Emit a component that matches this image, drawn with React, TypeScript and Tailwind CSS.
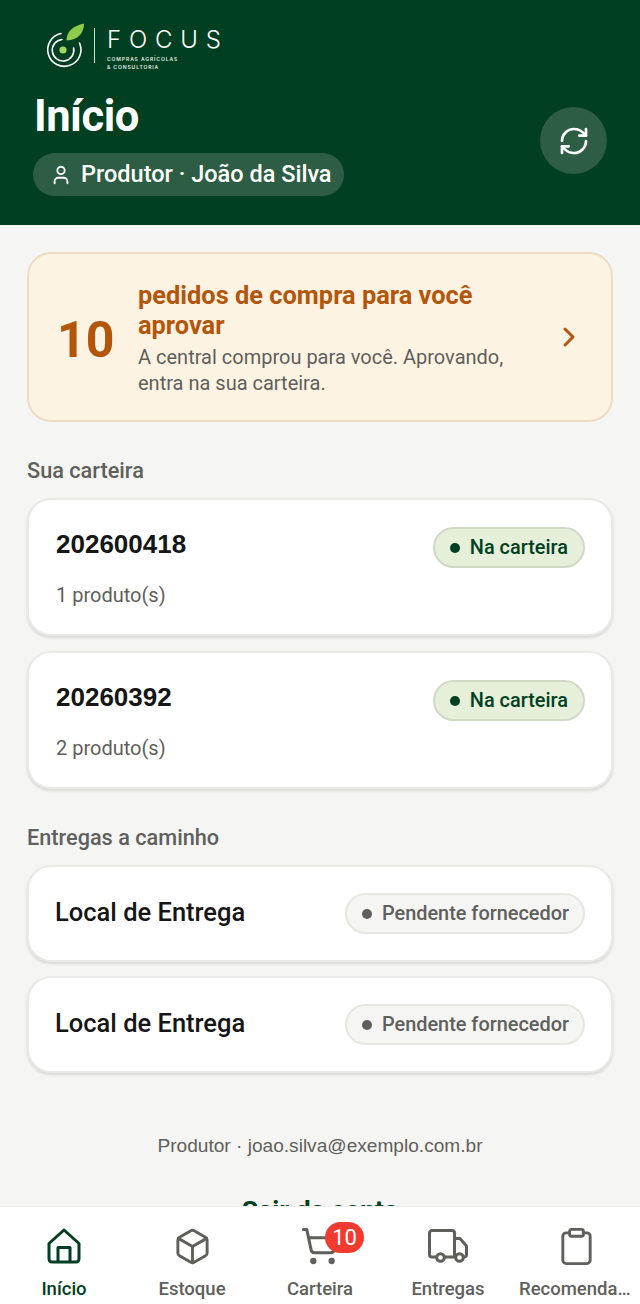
import React from 'react';
import { Box, ChevronRight, Clipboard, RefreshCw, ShoppingCart, User } from 'lucide-react';

const roboto = "font-['Roboto',sans-serif]";

const FocusMark = () => (
  <svg width="42" height="46" viewBox="0 0 42 46" fill="none">
    <path d="M16 10.500A16.600 16.600 0 1 0 34.500 20" stroke="#fff" strokeWidth="1.600" strokeLinecap="round" />
    <path d="M17 16.500A10.800 10.800 0 1 0 28.600 25" stroke="#fff" strokeWidth="1.600" strokeLinecap="round" />
    <circle cx="18" cy="27" r="3.600" fill="#a4d65e" />
    <path d="M21.500 17.500C21.500 8.500 28 3 39 0.500 39 10 33 17 21.500 17.500Z" fill="#8fcb4a" />
  </svg>
);

const HomeIcon = () => (
  <svg width="36" height="36" viewBox="0 0 36 36" fill="none" stroke="#003f21" strokeWidth="3" strokeLinejoin="round">
    <path d="M3 15.500 18 2l15 13.500v15.500a3 3 0 0 1-3 3H6a3 3 0 0 1-3-3Z" />
    <path d="M12 34V19.500h12V34" />
  </svg>
);

const TruckIcon = () => (
  <svg width="40" height="34" viewBox="0 0 40 34" fill="none" stroke="#5f5f5c" strokeWidth="3" strokeLinejoin="round">
    <path d="M9 28H4a2.500 2.500 0 0 1-2.500-2.500V4A2.500 2.500 0 0 1 4 1.500h20A2.500 2.500 0 0 1 26.500 4v24H16" />
    <path d="M26.500 9.500h5.500l6.500 7.500v8.500A2.500 2.500 0 0 1 36 28h-1" />
    <path d="M26.500 28H28" />
    <circle cx="12.500" cy="28.500" r="3.800" />
    <circle cx="31.500" cy="28.500" r="3.800" />
  </svg>
);

const Badge = ({ label, tone }: { label: string; tone: 'green' | 'gray' }) => (
  <span
    className={
      tone === 'green'
        ? 'flex h-[41px] items-center gap-[10px] rounded-full border-2 border-[#cfd9c6] bg-[#e6efd9] pl-[15px] pr-[15px] text-[#003f21]'
        : 'flex h-[41px] items-center gap-[10px] rounded-full border-2 border-[#e6e6e3] bg-[#f5f5f3] pl-[15px] pr-[14px] text-[#5f5f5c]'
    }
  >
    <span className={tone === 'green' ? 'h-[10px] w-[10px] rounded-full bg-[#003f21]' : 'h-[10px] w-[10px] rounded-full bg-[#5f5f5c]'} />
    <span className="text-[19.9px] font-medium leading-none">{label}</span>
  </span>
);

const WalletCard = ({ code, items }: { code: string; items: string }) => (
  <div className="h-[138px] rounded-[24px] border-2 border-[#e9e9e7] bg-white pl-[27px] pr-[26px] pt-[27px] shadow-[0_2px_3px_rgba(0,0,0,0.12)]">
    <div className="flex items-center justify-between">
      <span className="-mt-[6px] font-['Liberation_Sans',sans-serif] text-[26px] font-bold text-[#161616]">{code}</span>
      <Badge label="Na carteira" tone="green" />
    </div>
    <p className="mt-[12px] text-[20px] leading-[30px] text-[#5f5f5c]">{items}</p>
  </div>
);

const DeliveryCard = () => (
  <div className="flex h-[97px] items-center justify-between rounded-[24px] border-2 border-[#e9e9e7] bg-white pl-[26px] pr-[26px] shadow-[0_2px_3px_rgba(0,0,0,0.12)]">
    <span className="-mt-[3px] text-[25.5px] font-medium text-[#161616]">Local de Entrega</span>
    <Badge label="Pendente fornecedor" tone="gray" />
  </div>
);

const NavItem = ({ icon, label, active }: { icon: React.ReactNode; label: string; active?: boolean }) => (
  <div className="flex flex-col items-center">
    <div className="relative flex h-[44px] items-center justify-center">{icon}</div>
    <span
      className={
        active
          ? 'mt-[9px] text-[18.5px] font-medium leading-[24px] text-[#003f21]'
          : 'mt-[9px] max-w-[114px] truncate text-[18.5px] font-medium leading-[24px] text-[#5f5f5c]'
      }
    >
      {label}
    </span>
  </div>
);

const App = () => {
  return (
    <div className={`${roboto} flex h-[1304px] w-[640px] flex-col overflow-hidden bg-[#f5f5f3]`}>
      <header className="h-[225px] shrink-0 bg-[#003f21] pl-[33px] pr-[33px] pt-[20px] text-white">
        <div className="flex items-center pl-[12px]">
          <FocusMark />
          <span className="ml-[7px] h-[35px] w-px bg-[#cfe0d2]" />
          <div className="ml-[12px] mt-[8px]">
            <div className="font-['Inter',sans-serif] text-[24px] font-light leading-[24px] tracking-[7.8px]">FOCUS</div>
            <div className="mt-[3px] font-['Inter',sans-serif] text-[5px] font-semibold leading-[8px] tracking-[0.9px] text-[#e4ece5]">
              COMPRAS AGRÍCOLAS
              <br />
              &amp; CONSULTORIA
            </div>
          </div>
        </div>
        <div className="mt-[20px] flex items-end justify-between">
          <div>
            <h1 className="pl-px text-[43.500px] font-bold leading-[52px] tracking-[-0.5px]">Início</h1>
            <div className="mt-[10px] flex h-[43px] w-[311px] items-center gap-[9px] rounded-full bg-[#2d5d44] pl-[17px]">
              <User size={22} strokeWidth={2} />
              <span className="text-[23.500px] font-medium leading-none">Produtor · João da Silva</span>
            </div>
          </div>
          <button className="mb-[22px] flex h-[67px] w-[67px] items-center justify-center rounded-full bg-[#2d5d44]">
            <RefreshCw size={32} strokeWidth={2} />
          </button>
        </div>
      </header>

      <main className="min-h-0 flex-1 overflow-hidden pl-[27px] pr-[27px] pt-[27px]">
        <div className="flex h-[170px] items-center rounded-[24px] border-2 border-[#ecdcc6] bg-[#fdf3e3] pl-[28px] pr-[28px]">
          <span className="mt-[5px] w-[81px] shrink-0 text-[50px] font-bold leading-none text-[#b3560b]">10</span>
          <div className="mt-[1px] min-w-0 flex-1">
            <h2 className="w-[370px] text-[25.400px] font-bold leading-[30px] text-[#b3560b]">pedidos de compra para você aprovar</h2>
            <p className="mt-[4px] w-[380px] text-[20px] leading-[26px] text-[#5f5f5c]">
              A central comprou para você. Aprovando, entra na sua carteira.
            </p>
          </div>
          <ChevronRight size={32} strokeWidth={2.200} className="-mr-[2px] shrink-0 text-[#b3560b]" />
        </div>

        <h3 className="mt-[36px] text-[21.700px] font-medium leading-[26px] text-[#5f5f5c]">Sua carteira</h3>
        <div className="mt-[14px] flex flex-col gap-[15px]">
          <WalletCard code="202600418" items="1 produto(s)" />
          <WalletCard code="20260392" items="2 produto(s)" />
        </div>

        <h3 className="mt-[36px] text-[21.700px] font-medium leading-[26px] text-[#5f5f5c]">Entregas a caminho</h3>
        <div className="mt-[14px] flex flex-col gap-[14px]">
          <DeliveryCard />
          <DeliveryCard />
        </div>

        <p className="mt-[60px] text-center font-['Liberation_Sans',sans-serif] text-[19.100px] leading-[26px] text-[#5f5f5c]">
          Produtor · joao.silva@exemplo.com.br
        </p>
        <p className="mt-[37px] text-center text-[26.500px] font-bold leading-[28px] text-[#003f21]">Sair da conta</p>
      </main>

      <nav className="grid h-[98px] shrink-0 grid-cols-5 border-t border-[#ececea] bg-white pt-[17px]">
        <NavItem icon={<HomeIcon />} label="Início" active />
        <NavItem icon={<Box size={39} strokeWidth={1.800} className="text-[#5f5f5c]" />} label="Estoque" />
        <NavItem
          icon={
            <>
              <ShoppingCart size={40} strokeWidth={1.800} className="text-[#5f5f5c]" />
              <span className="absolute left-[25px] top-[-2px] flex h-[31px] min-w-[39px] items-center justify-center rounded-full bg-[#f23b30] text-[22px] leading-none text-white">
                10
              </span>
            </>
          }
          label="Carteira"
        />
        <NavItem icon={<TruckIcon />} label="Entregas" />
        <NavItem icon={<Clipboard size={41} strokeWidth={1.700} className="text-[#5f5f5c]" />} label="Recomendações" />
      </nav>
    </div>
  );
};

export default App;
